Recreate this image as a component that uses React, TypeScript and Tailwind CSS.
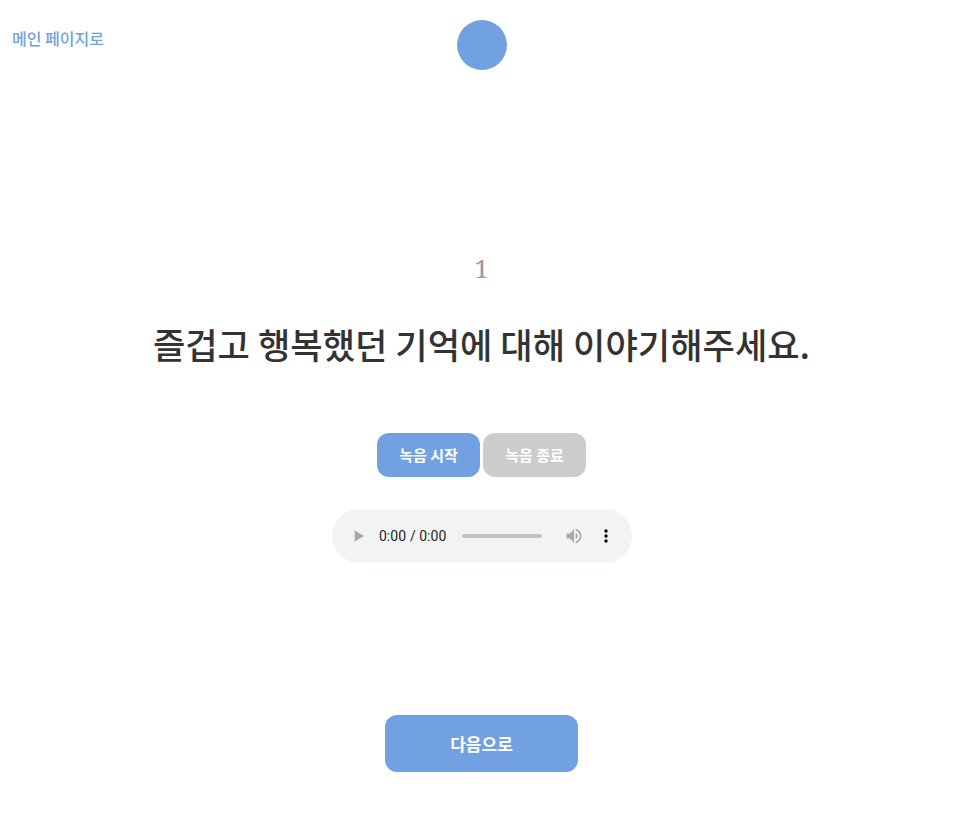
import React from "react";

export default function App() {
  return (
    <div className="relative min-h-[837px] w-full bg-white" style={{ fontFamily: '"Noto Sans CJK KR", "Noto Sans", sans-serif' }}>
      <a className="absolute left-[12px] top-[26px] text-[16px] font-medium text-[#72a1e2] no-underline">메인 페이지로</a>
      <div className="flex flex-col items-center pr-[6px]">
        <div className="mt-[20px] h-[50px] w-[50px] rounded-full bg-[#72a1e2]" />
        <div className="mt-[182px] text-[25px] leading-[32px] text-[#999]" style={{ fontFamily: '"Noto Serif", "Liberation Serif", serif' }}>1</div>
        <h1 className="mt-[35px] text-[35.2px] font-medium leading-[50px] text-[#333]">즐겁고 행복했던 기억에 대해 이야기해주세요.</h1>
        <div className="mt-[64px] flex gap-[3px]">
          <button className="h-[44px] w-[103px] rounded-[12px] bg-[#72a1e2] text-[15px] font-semibold text-white">녹음 시작</button>
          <button className="h-[44px] w-[103px] rounded-[12px] bg-[#cccccc] text-[15px] font-semibold text-white">녹음 종료</button>
        </div>
        <audio controls className="mt-[32px] h-[54px] w-[300px]" />
        <button className="mt-[152px] h-[57px] w-[193px] rounded-[12px] bg-[#72a1e2] text-[17px] font-bold text-white">다음으로</button>
      </div>
    </div>
  );
}
